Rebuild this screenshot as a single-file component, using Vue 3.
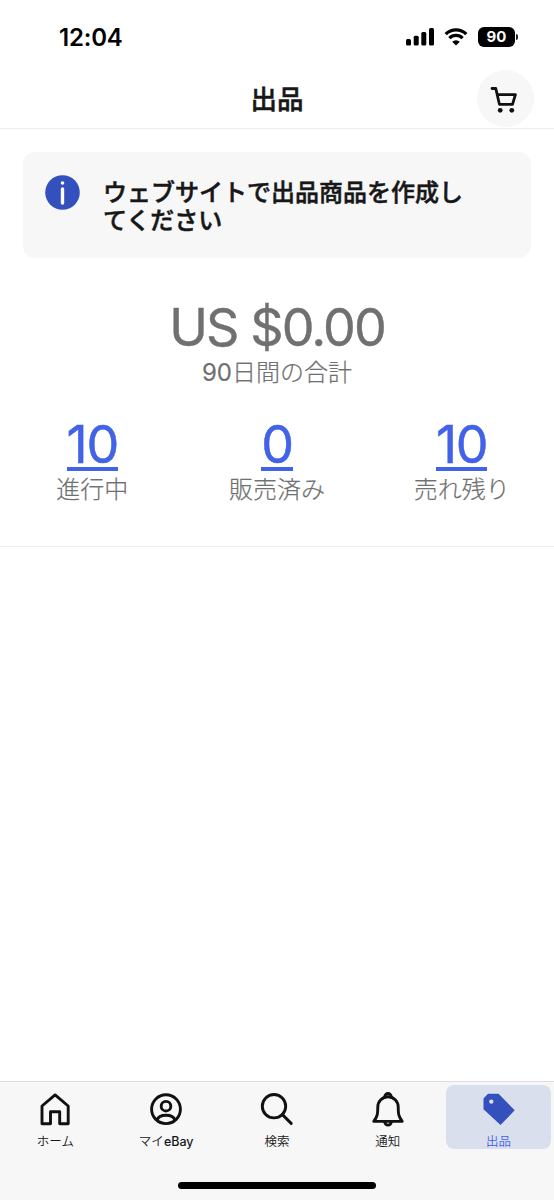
<script setup>
const stats = [
  { value: '10', label: '進行中' },
  { value: '0', label: '販売済み' },
  { value: '10', label: '売れ残り' },
]
const tabs = [
  { id: 'home', jp: 'ホーム', latin: '' },
  { id: 'account', jp: 'マイ', latin: 'eBay' },
  { id: 'search', jp: '検索', latin: '' },
  { id: 'bell', jp: '通知', latin: '' },
  { id: 'tag', jp: '出品', latin: '', active: true },
]
</script>

<template>
  <div class="screen">
    <div class="status">
      <span class="time">12:04</span>
      <div class="indicators">
        <svg class="signal" width="28" height="18" viewBox="0 0 28 18">
          <rect x="0" y="11" width="5" height="6.5" rx="1.5" />
          <rect x="7.7" y="7.8" width="5" height="9.7" rx="1.5" />
          <rect x="15.3" y="4" width="5" height="13.5" rx="1.5" />
          <rect x="23" y="0" width="5" height="17.5" rx="1.5" />
        </svg>
        <svg class="wifi" width="24" height="18" viewBox="0 0 24 18">
          <path d="M1.7 6.2 A14.6 14.6 0 0 1 22.3 6.2" />
          <path d="M5.4 10.1 A9.4 9.4 0 0 1 18.6 10.1" />
          <path class="dot" d="M12 17.5 L8.2 13.7 A5.4 5.4 0 0 1 15.8 13.7 Z" />
        </svg>
        <div class="battery">90</div>
        <span class="nub"></span>
      </div>
    </div>

    <header class="header">
      <span></span>
      <h1>出品</h1>
      <button class="cart" aria-label="カート">
        <svg width="28" height="28" viewBox="0 0 28 28">
          <path d="M2 2.5 H5.8 L9.4 18.3 H22.5 L25.4 8.7 H7.2" />
          <circle cx="10.2" cy="24.3" r="2.4" />
          <circle cx="21.8" cy="24.3" r="2.4" />
        </svg>
      </button>
    </header>

    <main>
      <section class="notice">
        <svg class="info" width="35" height="35" viewBox="0 0 35 35">
          <circle cx="17.5" cy="17.5" r="17.3" fill="#3450bd" />
          <circle cx="17.5" cy="8" r="1.8" fill="#fff" />
          <path d="M17.5 14 V28" stroke="#fff" stroke-width="3.4" stroke-linecap="round" />
        </svg>
        <p>ウェブサイトで出品商品を作成し<br />てください</p>
      </section>

      <section class="total">
        <div class="amount">US $0.00</div>
        <div class="caption"><span class="days">90</span>日間の合計</div>
      </section>

      <section class="stats">
        <div v-for="s in stats" :key="s.label" class="stat">
          <a class="value">{{ s.value }}</a>
          <span class="caption">{{ s.label }}</span>
        </div>
      </section>
    </main>

    <footer class="bottom">
      <nav>
        <div v-for="t in tabs" :key="t.id" class="tab" :class="{ active: t.active }">
          <svg class="icon" width="36" height="36" viewBox="0 0 36 36">
            <path v-if="t.id === 'home'" d="M5 15 L18.1 3.9 L31.2 15 V32.7 H22.7 V20.8 H13.5 V32.7 H5 Z" />
            <g v-else-if="t.id === 'account'">
              <circle cx="18" cy="18.2" r="14.4" />
              <circle cx="18" cy="15.2" r="4.8" />
              <path d="M9 29.2 Q10.6 24.3 18 24.3 T27 29.2" />
            </g>
            <g v-else-if="t.id === 'search'">
              <circle cx="15" cy="15.2" r="11.7" />
              <path d="M23.4 23.6 L32.2 32.4" stroke-linecap="round" />
            </g>
            <g v-else-if="t.id === 'bell'" transform="translate(0 0.9)">
              <path d="M7.8 15 A10.2 10.2 0 0 1 28.2 15 C28.2 22 28.5 24.3 32.2 29.5 H3.8 C7.5 24.3 7.8 22 7.8 15 Z" />
              <path d="M14.8 5.6 V4.8 A3.2 3.2 0 0 1 21.2 4.8 V5.6 M14.8 30 A3.2 3.2 0 0 0 21.2 30" />
            </g>
            <path
              v-else
              class="filled"
              fill-rule="evenodd"
              d="M7 2.8 H17.6 L33.7 19.3 L19.5 34 L2.5 18.2 V7.6 Z M12.5 10.6 A2.2 2.2 0 1 0 8.1 10.6 A2.2 2.2 0 1 0 12.5 10.6 Z"
            />
          </svg>
          <span class="tab-label">{{ t.jp }}<b v-if="t.latin">{{ t.latin }}</b></span>
        </div>
      </nav>
      <div class="home-bar"></div>
    </footer>
  </div>
</template>

<style>
html,
body {
  margin: 0;
  background: #fff;
}
</style>

<style scoped>
.screen {
  width: 554px;
  height: 1200px;
  display: flex;
  flex-direction: column;
  overflow: hidden;
  background: #fff;
  color: #171717;
  font-family: Inter, "Noto Sans CJK JP", sans-serif;
}
.screen * {
  box-sizing: border-box;
}
.status {
  height: 70px;
  padding: 23px 37px 0 59px;
  display: flex;
  align-items: flex-start;
  justify-content: space-between;
  color: #000;
}
.time {
  font-size: 24px;
  line-height: 30px;
  font-weight: 600;
  letter-spacing: -0.2px;
}
.indicators {
  display: flex;
  align-items: center;
  padding-top: 4px;
}
.wifi {
  margin: 0 10px 0 10.5px;
  fill: none;
  stroke: #000;
  stroke-width: 3.3;
}
.wifi .dot {
  fill: #000;
  stroke: none;
}
.battery {
  width: 37px;
  height: 20px;
  border-radius: 6px;
  background: #000;
  color: #fff;
  font-size: 15px;
  font-weight: 700;
  line-height: 20px;
  text-align: center;
}
.nub {
  width: 2px;
  height: 6px;
  margin-left: 1px;
  margin-right: -1px;
  background: #222;
  border-radius: 0 2px 2px 0;
}
.header {
  height: 59px;
  padding: 0 20px;
  display: grid;
  grid-template-columns: 57px 1fr 57px;
  border-bottom: 1px solid #ededed;
}
.header h1 {
  margin: 0;
  font-size: 26.5px;
  line-height: 58px;
  font-weight: 500;
  -webkit-text-stroke: 0.5px #171717;
  text-align: center;
}
.cart {
  width: 57px;
  height: 57px;
  padding: 0;
  border: 0;
  border-radius: 50%;
  background: #f7f7f7;
  display: grid;
  place-items: center;
}
.cart svg {
  margin-top: 3px;
  margin-right: 3px;
  fill: #111;
}
.cart path {
  fill: none;
  stroke: #111;
  stroke-width: 2.8;
  stroke-linejoin: round;
  stroke-linecap: round;
}
.notice {
  height: 106px;
  margin: 23px 23px 0;
  padding: 23px 22px;
  display: flex;
  gap: 23px;
  border-radius: 12px;
  background: #f7f7f7;
}
.notice p {
  margin: 4px 0 0;
  font-size: 24px;
  line-height: 28px;
  font-weight: 500;
  -webkit-text-stroke: 0.5px #171717;
  white-space: nowrap;
}
.info {
  flex: none;
}
.total {
  height: 159px;
  padding-top: 42px;
  text-align: center;
}
.amount {
  height: 56px;
  line-height: 56px;
  font-size: 52px;
  letter-spacing: -1.9px;
  -webkit-text-stroke: 0.4px #707070;
  color: #707070;
}
.caption {
  display: block;
  height: 34px;
  line-height: 34px;
  font-size: 24px;
  font-weight: 300;
  -webkit-text-stroke: 0.2px #707070;
  color: #707070;
}
.days {
  font-weight: 400;
}
.stats {
  height: 130px;
  display: grid;
  grid-template-columns: repeat(3, 1fr);
  border-bottom: 1px solid #ededed;
}
.stat {
  text-align: center;
}
.value {
  display: block;
  width: max-content;
  height: 54px;
  margin: 0 auto 2px;
  line-height: 56px;
  font-size: 52px;
  letter-spacing: -1.2px;
  -webkit-text-stroke: 0.5px #4262e8;
  color: #4262e8;
  border-bottom: 4px solid #4262e8;
}
.bottom {
  height: 119px;
  margin-top: auto;
  background: #f7f7f7;
  border-top: 1px solid #dedede;
}
nav {
  height: 70px;
  padding-top: 3px;
  display: grid;
  grid-template-columns: repeat(5, 1fr);
}
.tab {
  height: 64px;
  margin: 0 3px;
  padding-top: 6px;
  display: flex;
  flex-direction: column;
  align-items: center;
  border-radius: 8px;
}
.tab.active {
  background: #dadfee;
}
.icon {
  flex: none;
  fill: none;
  stroke: #111;
  stroke-width: 2.9;
  stroke-linejoin: round;
}
.icon .filled {
  fill: #3450bd;
  stroke: none;
}
.tab-label {
  flex: none;
  margin-top: 5px;
  font-size: 12.5px;
  line-height: 20px;
  font-weight: 350;
  white-space: nowrap;
}
.tab-label b {
  font-weight: 500;
}
.active .tab-label {
  color: #4262e8;
}
.home-bar {
  width: 198px;
  height: 7px;
  margin: 30px auto 0;
  border-radius: 4px;
  background: #000;
}
</style>
